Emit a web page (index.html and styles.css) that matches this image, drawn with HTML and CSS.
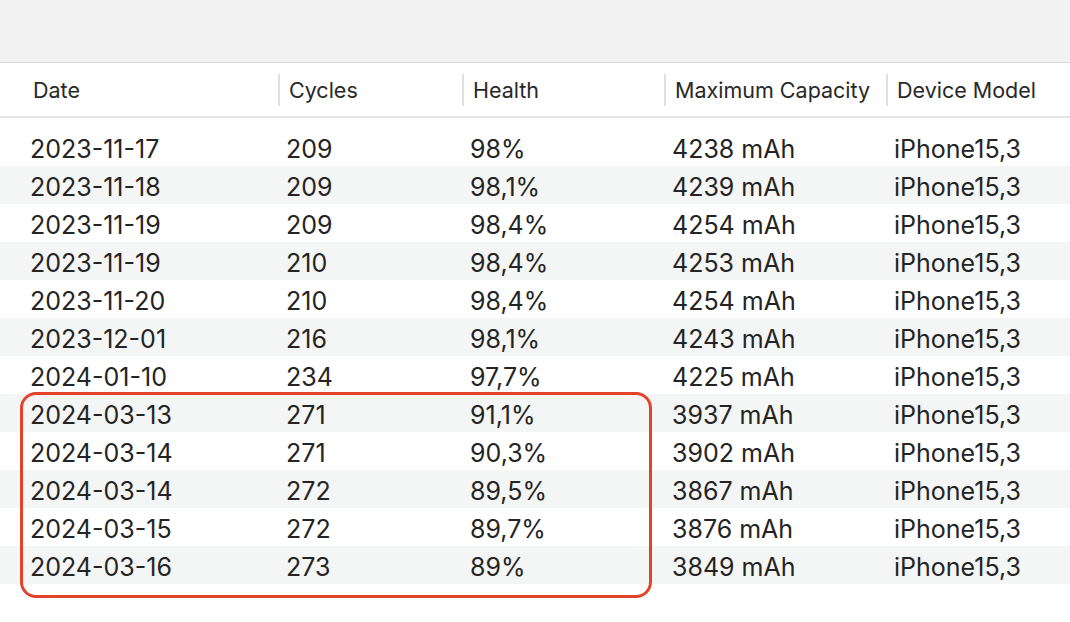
FILE: index.html
```html
<!DOCTYPE html>
<html lang="en">
<head>
<meta charset="utf-8">
<title>Battery History</title>
<link rel="stylesheet" href="styles.css">
</head>
<body>
<div class="window">
  <div class="toolbar"></div>
  <div class="table">
    <div class="head">
      <div class="hcell first">Date</div>
      <div class="hcell">Cycles</div>
      <div class="hcell">Health</div>
      <div class="hcell">Maximum Capacity</div>
      <div class="hcell">Device Model</div>
    </div>
    <div class="body">
      <div class="row"><div class="cell first">2023-11-17</div><div class="cell">209</div><div class="cell">98%</div><div class="cell">4238 mAh</div><div class="cell">iPhone15,3</div></div>
      <div class="row alt"><div class="cell first">2023-11-18</div><div class="cell">209</div><div class="cell">98,1%</div><div class="cell">4239 mAh</div><div class="cell">iPhone15,3</div></div>
      <div class="row"><div class="cell first">2023-11-19</div><div class="cell">209</div><div class="cell">98,4%</div><div class="cell">4254 mAh</div><div class="cell">iPhone15,3</div></div>
      <div class="row alt"><div class="cell first">2023-11-19</div><div class="cell">210</div><div class="cell">98,4%</div><div class="cell">4253 mAh</div><div class="cell">iPhone15,3</div></div>
      <div class="row"><div class="cell first">2023-11-20</div><div class="cell">210</div><div class="cell">98,4%</div><div class="cell">4254 mAh</div><div class="cell">iPhone15,3</div></div>
      <div class="row alt"><div class="cell first">2023-12-01</div><div class="cell">216</div><div class="cell">98,1%</div><div class="cell">4243 mAh</div><div class="cell">iPhone15,3</div></div>
      <div class="row"><div class="cell first">2024-01-10</div><div class="cell">234</div><div class="cell">97,7%</div><div class="cell">4225 mAh</div><div class="cell">iPhone15,3</div></div>
      <div class="row alt"><div class="cell first">2024-03-13</div><div class="cell">271</div><div class="cell">91,1%</div><div class="cell">3937 mAh</div><div class="cell">iPhone15,3</div></div>
      <div class="row"><div class="cell first">2024-03-14</div><div class="cell">271</div><div class="cell">90,3%</div><div class="cell">3902 mAh</div><div class="cell">iPhone15,3</div></div>
      <div class="row alt"><div class="cell first">2024-03-14</div><div class="cell">272</div><div class="cell">89,5%</div><div class="cell">3867 mAh</div><div class="cell">iPhone15,3</div></div>
      <div class="row"><div class="cell first">2024-03-15</div><div class="cell">272</div><div class="cell">89,7%</div><div class="cell">3876 mAh</div><div class="cell">iPhone15,3</div></div>
      <div class="row alt"><div class="cell first">2024-03-16</div><div class="cell">273</div><div class="cell">89%</div><div class="cell">3849 mAh</div><div class="cell">iPhone15,3</div></div>
      <div class="highlight"></div>
    </div>
  </div>
</div>
</body>
</html>
```
FILE: styles.css
```css
* { box-sizing: border-box; }
html, body {
  margin: 0;
  padding: 0;
  background: #ffffff;
}
body {
  font-family: Inter, "Liberation Sans", sans-serif;
  color: #242424;
  width: 1070px;
  height: 622px;
  overflow: hidden;
}
.toolbar {
  height: 63px;
  background: #f2f2f2;
  border-bottom: 1px solid #d9d9d9;
}
.head {
  display: grid;
  grid-template-columns: 278px 184px 202px 222px 1fr;
  height: 55px;
  border-bottom: 2px solid #e4e4e4;
  align-items: center;
}
.hcell {
  font-size: 21.5px;
  color: #282828;
  height: 32px;
  line-height: 32px;
  padding-left: 9px;
  border-left: 2px solid #e0e0e0;
  white-space: nowrap;
}
.hcell.first {
  border-left: none;
  padding-left: 33px;
}
.body {
  position: relative;
  padding-top: 10px;
}
.row {
  display: grid;
  grid-template-columns: 278px 184px 202px 222px 1fr;
  height: 38px;
  padding-top: 4px;
  line-height: 34px;
  font-size: 25px;
}
.row.alt { background: #f4f5f5; }
.cell {
  padding-left: 8px;
  white-space: nowrap;
}
.cell.first { padding-left: 30px; }
.highlight {
  position: absolute;
  left: 20px;
  top: 274px;
  width: 632px;
  height: 206px;
  border: 3px solid #e4432b;
  border-radius: 16px;
}
```
